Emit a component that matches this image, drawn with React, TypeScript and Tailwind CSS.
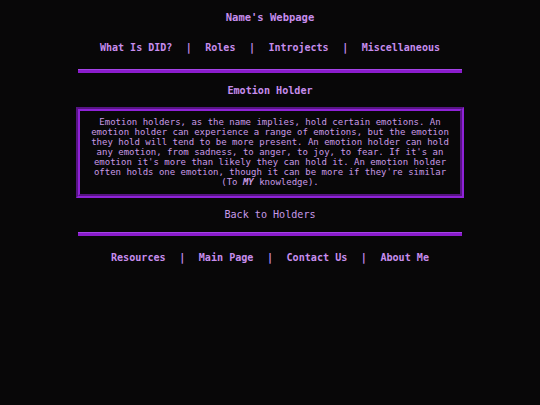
import React from "react";

const lines = [
  "Emotion holders, as the name implies, hold certain emotions. An",
  "emotion holder can experience a range of emotions, but the emotion",
  "they hold will tend to be more present. An emotion holder can hold",
  "any emotion, from sadness, to anger, to joy, to fear. If it's an",
  "emotion it's more than likely they can hold it. An emotion holder",
  "often holds one emotion, though it can be more if they're similar",
];

function Sep() {
  return <span className="mx-[13.5px]">|</span>;
}

function Rule() {
  return <div className="w-[384px] h-[4px] bg-[#8a1ccc] border-t border-[#a443e6]" />;
}

export default function App() {
  return (
    <div
      className="min-h-[405px] w-full bg-[#080708] text-[#c78ded] flex flex-col items-center"
      style={{ fontFamily: '"DejaVu Sans Mono", monospace' }}
    >
      <div className="mt-[11px] h-[12px] leading-[12px] text-[10.5px] font-bold">Name's Webpage</div>
      <div className="mt-[19px] h-[12px] leading-[12px] text-[10px] font-bold whitespace-pre">
        What Is DID?<Sep />Roles<Sep />Introjects<Sep />Miscellaneous
      </div>
      <div className="mt-[15px]">
        <Rule />
      </div>
      <div className="mt-[12px] h-[12px] leading-[12px] text-[10.1px] font-bold">Emotion Holder</div>
      <div className="mt-[10px] w-[388px] border-4 border-[#8f22d8] [border-style:groove] px-[4px] pt-[6px] pb-[7px]">
        <p className="text-[9px] leading-[10px] text-center text-[#c99ae6] whitespace-pre">
          {lines.map((l, i) => (
            <React.Fragment key={i}>
              {l}
              <br />
            </React.Fragment>
          ))}
          (To <b className="italic">MY</b> knowledge).
        </p>
      </div>
      <div className="mt-[11px] h-[12px] leading-[12px] text-[10.1px] text-[#c79ae8]">Back to Holders</div>
      <div className="mt-[11px]">
        <Rule />
      </div>
      <div className="mt-[16px] h-[12px] leading-[12px] text-[10.1px] font-bold whitespace-pre">
        Resources<Sep />Main Page<Sep />Contact Us<Sep />About Me
      </div>
    </div>
  );
}
